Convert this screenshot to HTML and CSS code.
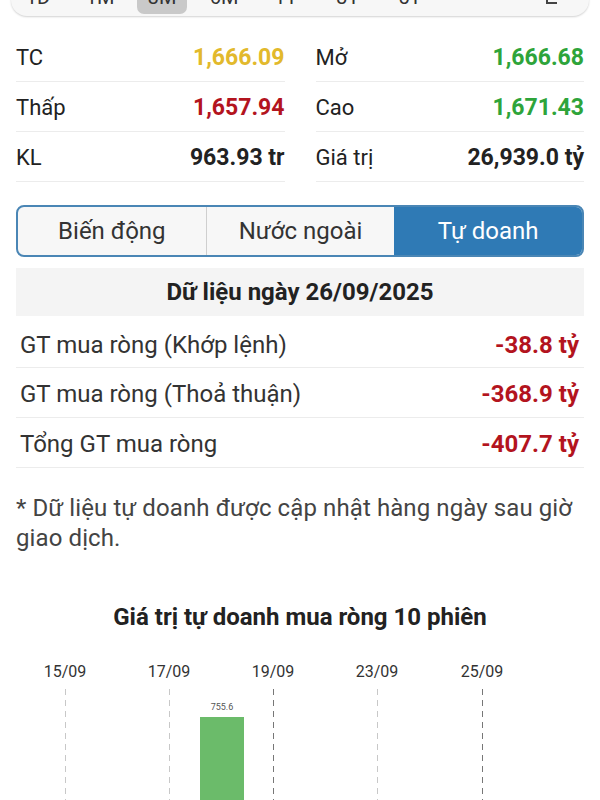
FILE: index.html
```html
<!DOCTYPE html>
<html lang="vi">
<head>
<meta charset="utf-8">
<link rel="stylesheet" href="styles.css">
</head>
<body>
<div class="periods">
  <div class="period-list">
    <span class="period">1D</span>
    <span class="period">1M</span>
    <span class="period active">3M</span>
    <span class="period">6M</span>
    <span class="period">1Y</span>
    <span class="period">3Y</span>
    <span class="period">5Y</span>
  </div>
  <svg class="period-icon" width="22" height="22" viewBox="0 0 22 22"><path d="M4 8v10h10M18 14V4H8" fill="none" stroke="#444" stroke-width="2"/></svg>
</div>

<div class="stats">
  <div class="stat"><span class="label">TC</span><span class="num ref">1,666.09</span></div>
  <div class="stat"><span class="label">Mở</span><span class="num up">1,666.68</span></div>
  <div class="stat"><span class="label">Thấp</span><span class="num down">1,657.94</span></div>
  <div class="stat"><span class="label">Cao</span><span class="num up">1,671.43</span></div>
  <div class="stat"><span class="label">KL</span><span class="num">963.93 tr</span></div>
  <div class="stat"><span class="label">Giá trị</span><span class="num">26,939.0 tỷ</span></div>
</div>

<div class="tabs">
  <div class="tab">Biến động</div>
  <div class="tab">Nước ngoài</div>
  <div class="tab selected">Tự doanh</div>
</div>

<div class="table">
  <div class="table-head">Dữ liệu ngày 26/09/2025</div>
  <div class="trow first"><span>GT mua ròng (Khớp lệnh)</span><span class="neg">-38.8 tỷ</span></div>
  <div class="trow"><span>GT mua ròng (Thoả thuận)</span><span class="neg">-368.9 tỷ</span></div>
  <div class="trow"><span>Tổng GT mua ròng</span><span class="neg">-407.7 tỷ</span></div>
</div>

<p class="note">* Dữ liệu tự doanh được cập nhật hàng ngày sau giờ giao dịch.</p>

<h2 class="chart-title">Giá trị tự doanh mua ròng 10 phiên</h2>

<svg class="chart" width="600" height="160" viewBox="0 0 600 160">
  <g font-family="Roboto, sans-serif" font-size="16" fill="#333" text-anchor="middle">
    <text x="65" y="26">15/09</text>
    <text x="169" y="26">17/09</text>
    <text x="273" y="26">19/09</text>
    <text x="377" y="26">23/09</text>
    <text x="482" y="26">25/09</text>
  </g>
  <g stroke-width="1" stroke-dasharray="6 5" fill="none">
    <line x1="65.5" y1="38" x2="65.5" y2="160" stroke="#c8c8c8"/>
    <line x1="169.5" y1="38" x2="169.5" y2="160" stroke="#c8c8c8"/>
    <line x1="273.5" y1="38" x2="273.5" y2="160" stroke="#777"/>
    <line x1="377.5" y1="38" x2="377.5" y2="160" stroke="#c8c8c8"/>
    <line x1="482.5" y1="38" x2="482.5" y2="160" stroke="#777"/>
  </g>
  <rect x="200" y="66" width="44" height="94" fill="#6bbb6a"/>
  <text x="222" y="59" font-family="Roboto, sans-serif" font-size="9" fill="#555" text-anchor="middle">755.6</text>
</svg>
</body>
</html>
```

FILE: styles.css
```css
* { box-sizing: border-box; }
html, body { margin: 0; padding: 0; background: #fff; }
body {
  width: 600px;
  height: 800px;
  overflow: hidden;
  font-family: Roboto, "Noto Sans", sans-serif;
  color: #222;
}

.periods {
  margin: -20px 11px 0;
  height: 36px;
  background: #f7f7f7;
  border-radius: 0 0 16px 16px;
  box-shadow: 0 1px 2px rgba(0,0,0,0.18);
  display: flex;
  align-items: flex-start;
  justify-content: space-between;
  padding: 0 24px 0 0;
}
.period-list { display: flex; margin-left: -4px; }
.period {
  width: 62px;
  height: 34px;
  line-height: 34px;
  text-align: center;
  font-size: 20px;
  color: #333;
  display: flex;
  justify-content: center;
}
.period.active {
  background: #c9c9c9;
  border-radius: 0 0 7px 7px;
  margin: 0 6px;
  width: 50px;
}
.period-icon { margin-top: 5px; }

.stats {
  margin: 16px 16px 0;
  display: grid;
  grid-template-columns: 1fr 1fr;
  column-gap: 31px;
}
.stat {
  height: 50px;
  display: flex;
  align-items: center;
  justify-content: space-between;
  padding-top: 2px;
  border-bottom: 1px solid #ececec;
}
.label { font-size: 22px; color: #222; }
.num { font-size: 23px; font-weight: 700; color: #222; }
.num.ref { color: #e2b92c; }
.num.up { color: #2ea43a; }
.num.down { color: #b3141e; }

.tabs {
  margin: 23px 16px 0;
  height: 52px;
  display: flex;
  border: 2px solid #4a86b5;
  border-radius: 8px;
  overflow: hidden;
  background: #f7f7f7;
}
.tab {
  flex: 1;
  display: flex;
  align-items: center;
  justify-content: center;
  font-size: 24px;
  color: #333;
}
.tab + .tab { border-left: 1px solid #cfcfcf; }
.tab.selected { background: #2f7ab5; color: #fff; border-left: none; }

.table { margin: 11px 16px 0; }
.table-head {
  height: 48px;
  background: #f4f4f4;
  display: flex;
  align-items: center;
  justify-content: center;
  font-size: 24px;
  font-weight: 700;
  color: #222;
}
.trow {
  height: 50px;
  display: flex;
  align-items: center;
  justify-content: space-between;
  padding: 3px 5px 0 4px;
  border-bottom: 1px solid #ececec;
  font-size: 24px;
  color: #333;
}
.trow.first { height: 52px; padding-top: 6px; }
.trow .neg { font-weight: 700; color: #b3141e; }

.note {
  margin: 25px 16px 0;
  font-size: 24px;
  letter-spacing: 0.1px;
  line-height: 30px;
  color: #444;
}

.chart-title {
  margin: 50px 0 0;
  text-align: center;
  font-size: 24px;
  font-weight: 700;
  color: #222;
}
.chart { display: block; margin-top: 20px; }
```
